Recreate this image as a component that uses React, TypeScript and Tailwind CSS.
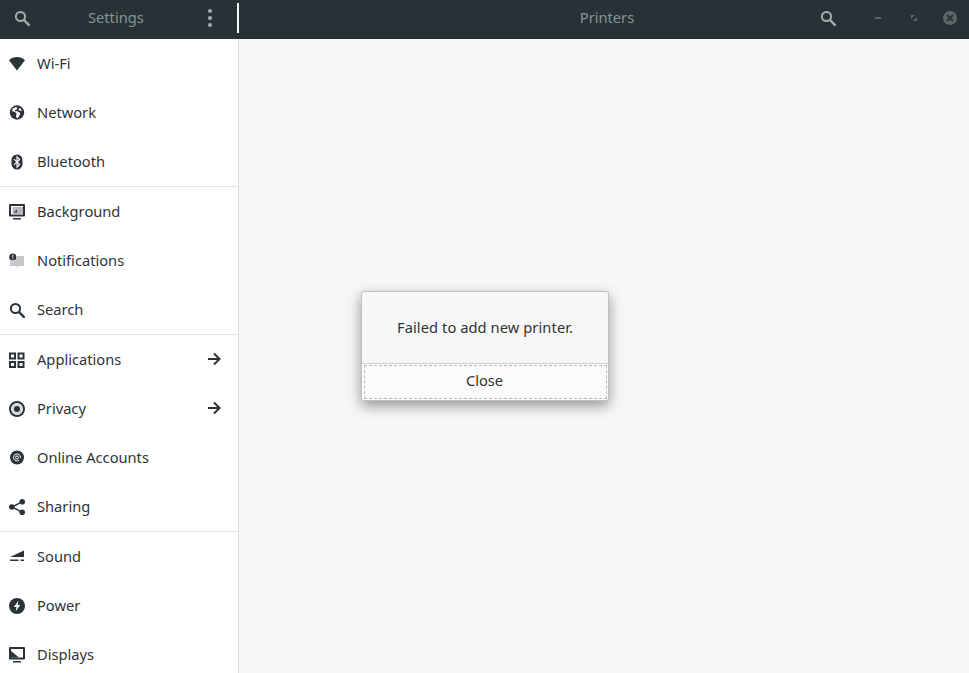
import type { ReactNode } from "react";

const Ico = ({ children }: { children: ReactNode }) => (
  <svg viewBox="0 0 16 16" width="16" height="16" fill="#2a3338" className="shrink-0">
    {children}
  </svg>
);

const SearchIco = ({ color = "#2a3338" }: { color?: string }) => (
  <svg viewBox="0 0 16 16" width="16" height="16" fill="none" stroke={color} className="shrink-0">
    <circle cx="6.5" cy="6.5" r="4.6" strokeWidth="2" />
    <path d="M10 10l4.800 4.800" strokeWidth="2.400" strokeLinecap="round" />
  </svg>
);

const Arrow = () => (
  <svg viewBox="0 0 14 14" width="14" height="14" fill="none" stroke="#2a3338" strokeWidth="2" className="-mt-[1px]">
    <path d="M1 7h11.500M7 1.500l5.500 5.500L7 12.500" />
  </svg>
);

const icons: Record<string, ReactNode> = {
  wifi: (
    <Ico>
      <path d="M8 14.500L0 4.200C2.200 2.200 5 1 8 1s5.800 1.200 8 3.200z" />
    </Ico>
  ),
  network: (
    <Ico>
      <circle cx="8" cy="7.500" r="7.200" />
      <path fill="#fff" d="M7.500 1.800L3.800 3.500 3 6l3 1 1.500 1.500-.5 3.500 1.500 1.500 2.200-3.500.5-2L8 6l-2 .5V5l2.200-.8zM11 2.800L9.500 4l.5 1.500 3 .5z" />
    </Ico>
  ),
  bluetooth: (
    <Ico>
      <rect x="2.500" y="0.500" width="11" height="15" rx="5.500" />
      <path fill="none" stroke="#fff" strokeWidth="1.100" d="M5 5.200l5.700 5.300L8 13.200V2.800l2.700 2.700L5 10.800" />
    </Ico>
  ),
  background: (
    <Ico>
      <path fillRule="evenodd" d="M1 0h14a1 1 0 011 1v10.500a1 1 0 01-1 1H1a1 1 0 01-1-1V1a1 1 0 011-1zM2 2v8.500h12V2z" />
      <path d="M4 14h8v1.500H4z" />
      <path fill="#b5b9ba" d="M3.500 3H14v7.500H3.500z" />
      <path d="M5 8.500l3-3v3z" />
    </Ico>
  ),
  notifications: (
    <Ico>
      <path fill="#c5c8c9" d="M1 3h14v10h-5.500l-1 2-1-2H1z" />
      <circle cx="3.800" cy="4" r="4.400" fill="#fff" />
      <circle cx="3.800" cy="4" r="3.600" />
      <path fill="#fff" d="M3.300 1.800h1v2.800h-1zM3.300 5.300h1v1h-1z" />
    </Ico>
  ),
  search: <SearchIco />,
  applications: (
    <Ico>
      <path fillRule="evenodd" d="M0 0.500h7v7H0zm2 2v3h3v-3zM8.500 0.500h7v7h-7zm2 2v3h3v-3zM0 9h7v7H0zm2 2v3h3v-3zM8.500 9h7v7h-7zm2 2v3h3v-3z" />
    </Ico>
  ),
  privacy: (
    <Ico>
      <circle cx="8" cy="8" r="7" fill="none" stroke="#2a3338" strokeWidth="2" />
      <circle cx="8" cy="8" r="5.500" fill="#d5d7d8" />
      <circle cx="8" cy="8" r="3" />
    </Ico>
  ),
  online: (
    <Ico>
      <circle cx="8" cy="7.500" r="7" />
      <path fill="none" stroke="#fff" strokeWidth="1" d="M11.500 8.300V7.500a3.500 3.500 0 10-1.400 2.800" />
      <circle cx="8" cy="7.500" r="1.500" fill="none" stroke="#fff" strokeWidth="1" />
    </Ico>
  ),
  sharing: (
    <Ico>
      <circle cx="2.800" cy="8" r="2.800" />
      <circle cx="13.200" cy="2.800" r="2.800" />
      <circle cx="13.200" cy="13.200" r="2.800" />
      <path fill="none" stroke="#2a3338" strokeWidth="1.500" d="M13 2.800L3 8l10 5.200" />
    </Ico>
  ),
  sound: (
    <Ico>
      <path d="M1 8L15 1.500V8zM1 10.500h8.500v1.500H1zM11.500 10.500H15V12h-3.500z" />
    </Ico>
  ),
  power: (
    <Ico>
      <circle cx="8" cy="8" r="8" />
      <path fill="#fff" d="M9.500 2.800L4.800 9h2.700L6.800 13.200 11.200 7H8.500z" />
    </Ico>
  ),
  displays: (
    <Ico>
      <path fillRule="evenodd" d="M1 0h14a1 1 0 011 1v10.500a1 1 0 01-1 1H1a1 1 0 01-1-1V1a1 1 0 011-1zM2 2v8.500h12V2z" />
      <path d="M4 14h8v1.500H4zM2 4l8 6.500H2z" />
    </Ico>
  ),
};

type Item = { icon: string; label: string; arrow?: boolean };

const groups: Item[][] = [
  [
    { icon: "wifi", label: "Wi-Fi" },
    { icon: "network", label: "Network" },
    { icon: "bluetooth", label: "Bluetooth" },
  ],
  [
    { icon: "background", label: "Background" },
    { icon: "notifications", label: "Notifications" },
    { icon: "search", label: "Search" },
  ],
  [
    { icon: "applications", label: "Applications", arrow: true },
    { icon: "privacy", label: "Privacy", arrow: true },
    { icon: "online", label: "Online Accounts" },
    { icon: "sharing", label: "Sharing" },
  ],
  [
    { icon: "sound", label: "Sound" },
    { icon: "power", label: "Power" },
    { icon: "displays", label: "Displays" },
  ],
];

export default function App() {
  return (
    <div className="w-[969px] h-[673px] overflow-hidden flex flex-col bg-[#f7f7f7] font-['Noto_Sans',sans-serif] text-[14.67px] text-[#2e3436]">
      {/* barra de título */}
      <header className="h-[39px] shrink-0 flex bg-[#283236] text-[#869395] pb-[3px]">
        <div className="w-[237px] shrink-0 flex items-center pl-[14px]">
          <SearchIco color="#a5acae" />
          <span className="ml-[58px] pb-[2px]">Settings</span>
          <span className="ml-auto mr-[25px] flex flex-col gap-[3px]">
            <i className="block w-[4px] h-[4px] rounded-full bg-[#a5acae]" />
            <i className="block w-[4px] h-[4px] rounded-full bg-[#a5acae]" />
            <i className="block w-[4px] h-[4px] rounded-full bg-[#a5acae]" />
          </span>
        </div>
        <div className="w-[2px] h-[30px] mt-[3px] bg-[#f7f7f7] shrink-0" />
        <div className="flex-1 relative flex items-center justify-center pl-[6px]">
          <span className="pb-[2px]">Printers</span>
          <div className="absolute inset-y-0 right-0 flex items-center">
            <SearchIco color="#a5acae" />
            <span className="ml-[39px] w-[6px] h-[2px] bg-[#5d6568]" />
            <svg viewBox="0 0 6 6" width="6" height="6" className="ml-[30px]">
              <path fill="#5d6568" d="M0 0h4L0 4zM6 2v4H2z" />
            </svg>
            <span className="ml-[26px] mr-[12px] w-[14px] h-[14px] rounded-full bg-[#5d6568] flex items-center justify-center">
              <svg viewBox="0 0 8 8" width="8" height="8" stroke="#283236" strokeWidth="1.800">
                <path d="M1 1l6 6M7 1L1 7" />
              </svg>
            </span>
          </div>
        </div>
      </header>

      <div className="flex-1 flex min-h-0">
        {/* lista lateral */}
        <aside className="w-[239px] shrink-0 bg-white border-r border-[#dcdcdc] overflow-hidden">
          {groups.map((group, i) => (
            <div key={i} className={i < groups.length - 1 ? "border-b border-[#e3e3e3]" : ""}>
              {group.map((item) => (
                <div key={item.label} className="h-[49px] flex items-center pl-[9px] pr-[17px] gap-[12px]">
                  {icons[item.icon]}
                  <span className="flex-1 pb-[2px]">{item.label}</span>
                  {item.arrow && <Arrow />}
                </div>
              ))}
            </div>
          ))}
        </aside>

        {/* contenido */}
        <main className="flex-1 relative">
          <div className="absolute left-[122px] top-[252px] w-[248px] h-[110px] flex flex-col rounded-[3px] border border-[#c0c0c0] bg-[#f7f7f7] shadow-[0_5px_14px_rgba(0,0,0,0.4)] overflow-hidden">
            <div className="h-[71px] shrink-0 flex items-center justify-center pb-[2px] tracking-[0.08px]">
              Failed to add new printer.
            </div>
            <div className="flex-1 border-t border-[#cfcfcf] bg-white p-[1px] pl-[2px]">
              <div className="h-full border border-dashed border-[#b8b8b8] bg-[#fbfbfb] flex items-center justify-center pb-[5px] pr-[2px]">
                Close
              </div>
            </div>
          </div>
        </main>
      </div>
    </div>
  );
}
